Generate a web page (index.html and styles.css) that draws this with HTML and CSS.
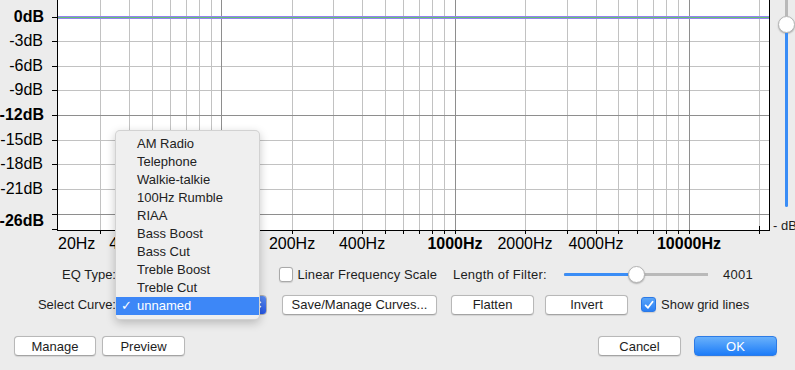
FILE: index.html
```html
<!DOCTYPE html>
<html lang="en">
<head>
  <meta charset="UTF-8">
  <title>Equalization</title>
  <link rel="stylesheet" href="styles.css">
</head>
<body>

<div class="dialog">
  <div class="graph">
    <svg class="plot" width="772" height="252" viewBox="0 0 772 252">
      <rect x="57" y="0" width="712" height="230" fill="#fff"/>
      <!-- horizontal grid -->
      <g class="grid">
        <line x1="57" y1="41.5" x2="769" y2="41.5"/>
        <line x1="57" y1="66.5" x2="769" y2="66.5"/>
        <line x1="57" y1="90.5" x2="769" y2="90.5"/>
        <line x1="57" y1="140.5" x2="769" y2="140.5"/>
        <line x1="57" y1="164.5" x2="769" y2="164.5"/>
        <line x1="57" y1="189.5" x2="769" y2="189.5"/>
      </g>
      <!-- vertical grid -->
      <g class="grid">
        <line x1="100.5" y1="0" x2="100.5" y2="230"/>
        <line x1="129.5" y1="0" x2="129.5" y2="230"/>
        <line x1="152.5" y1="0" x2="152.5" y2="230"/>
        <line x1="170.5" y1="0" x2="170.5" y2="230"/>
        <line x1="186.5" y1="0" x2="186.5" y2="230"/>
        <line x1="199.5" y1="0" x2="199.5" y2="230"/>
        <line x1="211.5" y1="0" x2="211.5" y2="230"/>
        <line x1="292.5" y1="0" x2="292.5" y2="230"/>
        <line x1="333.5" y1="0" x2="333.5" y2="230"/>
        <line x1="362.5" y1="0" x2="362.5" y2="230"/>
        <line x1="385.5" y1="0" x2="385.5" y2="230"/>
        <line x1="403.5" y1="0" x2="403.5" y2="230"/>
        <line x1="419.5" y1="0" x2="419.5" y2="230"/>
        <line x1="432.5" y1="0" x2="432.5" y2="230"/>
        <line x1="444.5" y1="0" x2="444.5" y2="230"/>
        <line x1="525.5" y1="0" x2="525.5" y2="230"/>
        <line x1="567.5" y1="0" x2="567.5" y2="230"/>
        <line x1="596.5" y1="0" x2="596.5" y2="230"/>
        <line x1="618.5" y1="0" x2="618.5" y2="230"/>
        <line x1="637.5" y1="0" x2="637.5" y2="230"/>
        <line x1="653.5" y1="0" x2="653.5" y2="230"/>
        <line x1="666.5" y1="0" x2="666.5" y2="230"/>
        <line x1="678.5" y1="0" x2="678.5" y2="230"/>
        <line x1="759.5" y1="0" x2="759.5" y2="230"/>
      </g>
      <g class="grid-major">
        <line x1="57" y1="115.5" x2="769" y2="115.5"/>
        <line x1="57" y1="214.5" x2="769" y2="214.5"/>
        <line x1="221.5" y1="0" x2="221.5" y2="230"/>
        <line x1="455.5" y1="0" x2="455.5" y2="230"/>
        <line x1="689.5" y1="0" x2="689.5" y2="230"/>
      </g>
      <!-- curve -->
      <line class="curve" x1="57" y1="17.5" x2="769" y2="17.5"/>
      <line class="curve-core" x1="57" y1="17.5" x2="769" y2="17.5"/>
      <!-- axes -->
      <g class="axis">
        <line x1="57.5" y1="0" x2="57.5" y2="231"/>
        <line x1="769.5" y1="0" x2="769.5" y2="231"/>
        <line x1="57" y1="230.5" x2="770" y2="230.5"/>
        <line x1="52" y1="17.5" x2="57" y2="17.5"/>
        <line x1="52" y1="41.5" x2="57" y2="41.5"/>
        <line x1="52" y1="66.5" x2="57" y2="66.5"/>
        <line x1="52" y1="90.5" x2="57" y2="90.5"/>
        <line x1="52" y1="115.5" x2="57" y2="115.5"/>
        <line x1="52" y1="140.5" x2="57" y2="140.5"/>
        <line x1="52" y1="164.5" x2="57" y2="164.5"/>
        <line x1="52" y1="189.5" x2="57" y2="189.5"/>
        <line x1="52" y1="214.5" x2="57" y2="214.5"/>
        <line x1="52" y1="229.5" x2="57" y2="229.5"/>
        <line x1="100.5" y1="230" x2="100.5" y2="234"/>
        <line x1="129.5" y1="230" x2="129.5" y2="234"/>
        <line x1="152.5" y1="230" x2="152.5" y2="234"/>
        <line x1="170.5" y1="230" x2="170.5" y2="234"/>
        <line x1="186.5" y1="230" x2="186.5" y2="234"/>
        <line x1="199.5" y1="230" x2="199.5" y2="234"/>
        <line x1="211.5" y1="230" x2="211.5" y2="234"/>
        <line x1="221.5" y1="230" x2="221.5" y2="234"/>
        <line x1="292.5" y1="230" x2="292.5" y2="234"/>
        <line x1="333.5" y1="230" x2="333.5" y2="234"/>
        <line x1="362.5" y1="230" x2="362.5" y2="234"/>
        <line x1="385.5" y1="230" x2="385.5" y2="234"/>
        <line x1="403.5" y1="230" x2="403.5" y2="234"/>
        <line x1="419.5" y1="230" x2="419.5" y2="234"/>
        <line x1="432.5" y1="230" x2="432.5" y2="234"/>
        <line x1="444.5" y1="230" x2="444.5" y2="234"/>
        <line x1="455.5" y1="230" x2="455.5" y2="234"/>
        <line x1="525.5" y1="230" x2="525.5" y2="234"/>
        <line x1="567.5" y1="230" x2="567.5" y2="234"/>
        <line x1="596.5" y1="230" x2="596.5" y2="234"/>
        <line x1="618.5" y1="230" x2="618.5" y2="234"/>
        <line x1="637.5" y1="230" x2="637.5" y2="234"/>
        <line x1="653.5" y1="230" x2="653.5" y2="234"/>
        <line x1="666.5" y1="230" x2="666.5" y2="234"/>
        <line x1="678.5" y1="230" x2="678.5" y2="234"/>
        <line x1="689.5" y1="230" x2="689.5" y2="234"/>
        <line x1="759.5" y1="226" x2="759.5" y2="234"/>
      </g>
      <!-- dB labels -->
      <g class="ylabels">
        <text class="major" x="44" y="22">0dB</text>
        <text x="43" y="46">-3dB</text>
        <text x="43" y="71">-6dB</text>
        <text x="43" y="95">-9dB</text>
        <text class="major" x="44" y="120">-12dB</text>
        <text x="43" y="145">-15dB</text>
        <text x="43" y="169">-18dB</text>
        <text x="43" y="194">-21dB</text>
        <text class="major" x="44" y="226">-26dB</text>
      </g>
      <!-- Hz labels -->
      <g class="xlabels">
        <text class="start" x="58" y="249">20Hz</text>
        <text x="128" y="249">40Hz</text>
        <text class="major" x="221" y="249">100Hz</text>
        <text x="292" y="249">200Hz</text>
        <text x="362" y="249">400Hz</text>
        <text class="major" x="455" y="249">1000Hz</text>
        <text x="525" y="249">2000Hz</text>
        <text x="596" y="249">4000Hz</text>
        <text class="major" x="689" y="249">10000Hz</text>
      </g>
    </svg>

    <div class="gain">
      <div class="vslider">
        <span class="vtrack-top"></span>
        <span class="thumb"></span>
        <span class="vtrack-fill"></span>
      </div>
      <span class="gain-label">- dB</span>
    </div>
  </div>

  <div class="row row-type">
    <span class="field-label">EQ Type:</span>
    <label class="check check-linear"><span class="box"></span>Linear Frequency Scale</label>
    <span class="filter-label">Length of Filter:</span>
    <div class="hslider">
      <span class="hfill"></span>
      <span class="thumb"></span>
    </div>
    <span class="filter-value">4001</span>
  </div>

  <div class="row row-curve">
    <span class="field-label">Select Curve:</span>
    <div class="popup-button">
      <span class="popup-value">unnamed</span>
      <span class="popup-arrows">
        <svg width="7" height="11" viewBox="0 0 7 11"><path d="M1 4 L3.5 1.5 L6 4 M1 7 L3.5 9.5 L6 7" fill="none" stroke="#fff" stroke-width="1.3"/></svg>
      </span>
    </div>
    <button class="btn btn-save">Save/Manage Curves...</button>
    <button class="btn btn-flatten">Flatten</button>
    <button class="btn btn-invert">Invert</button>
    <label class="check check-grid"><span class="box checked">
      <svg width="10" height="10" viewBox="0 0 10 10"><path d="M1.6 5.4 L4 7.8 L8.6 1.8" fill="none" stroke="#fff" stroke-width="1.8" stroke-linecap="round" stroke-linejoin="round"/></svg>
    </span>Show grid lines</label>
  </div>

  <div class="row row-footer">
    <button class="btn">Manage</button>
    <button class="btn btn-preview">Preview</button>
    <button class="btn btn-cancel">Cancel</button>
    <button class="btn btn-ok">OK</button>
  </div>

  <ul class="menu">
    <li>AM Radio</li>
    <li>Telephone</li>
    <li>Walkie-talkie</li>
    <li>100Hz Rumble</li>
    <li>RIAA</li>
    <li>Bass Boost</li>
    <li>Bass Cut</li>
    <li>Treble Boost</li>
    <li>Treble Cut</li>
    <li class="selected"><span class="tick">✓</span>unnamed</li>
  </ul>
</div>

</body>
</html>
```

FILE: styles.css
```css
/* Equalization dialog */
body {
  margin: 0;
  background-color: #ececec;
  font-family: "Liberation Sans", Arial, sans-serif;
  font-size: 13px;
  color: #1d1d1d;
  overflow: hidden;
}
.dialog {
  position: relative;
  width: 795px;
  height: 370px;
  overflow: hidden;
}

/* graph */
.graph {
  display: flex;
  height: 252px;
}
.plot {
  display: block;
  flex: none;
}
.grid line {
  stroke: #c2c2c2;
  stroke-width: 1;
}
.grid-major line {
  stroke: #8e8e8e;
  stroke-width: 1;
}
.curve {
  stroke: #9482ef;
  stroke-width: 3;
}
.curve-core {
  stroke: #63c46f;
  stroke-width: 1;
}
.axis line {
  stroke: #000;
  stroke-width: 1;
}
.ylabels text,
.xlabels text {
  font-family: "Liberation Sans", Arial, sans-serif;
  font-size: 16px;
  fill: #000;
}
.ylabels text {
  text-anchor: end;
}
.xlabels text {
  text-anchor: middle;
}
.xlabels text.start {
  text-anchor: start;
}
.ylabels .major,
.xlabels .major {
  font-weight: bold;
}

.gain {
  display: flex;
  flex-direction: column;
  width: 23px;
}
.vslider {
  display: flex;
  flex-direction: column;
  align-items: center;
  width: 16px;
  margin-left: 6px;
}
.vtrack-top {
  width: 3px;
  height: 16px;
  background: #b9b9b9;
}
.vtrack-fill {
  width: 3px;
  height: 174px;
  background: #3a8df6;
  border-radius: 0 0 2px 2px;
}
.gain-label {
  margin-top: 11px;
  margin-left: 1px;
  white-space: nowrap;
  line-height: 15px;
}

.thumb {
  display: block;
  width: 15px;
  height: 15px;
  border-radius: 50%;
  background: #fff;
  border: 0.5px solid #b4b4b4;
  box-shadow: 0 1px 1.5px rgba(0, 0, 0, 0.25);
  flex: none;
}

/* rows */
.row {
  display: flex;
  align-items: center;
}
.field-label {
  width: 116px;
  text-align: right;
  flex: none;
}
.row-type {
  height: 20px;
  margin-top: 12px;
}
.row-curve {
  height: 21px;
  margin-top: 10px;
}
.row-footer {
  height: 20px;
  margin-top: 21px;
  padding: 0 18px 0 14px;
}

.check {
  display: flex;
  align-items: center;
  white-space: nowrap;
}
.check .box {
  display: flex;
  align-items: center;
  justify-content: center;
  width: 13px;
  height: 13px;
  margin-right: 5px;
  background: #fff;
  border: 0.5px solid #a9a9a9;
  border-radius: 3px;
  box-shadow: 0 0.5px 1px rgba(0, 0, 0, 0.12);
}
.check .box.checked {
  background: linear-gradient(#5aa5f8, #2a7ff4);
  border-color: #2b79e6;
}
.check-linear {
  width: 158px;
  margin-left: 163px;
  letter-spacing: 0.1px;
}
.filter-label {
  width: 95px;
  margin-left: 16px;
  letter-spacing: 0.2px;
}
.hslider {
  position: relative;
  display: flex;
  align-items: center;
  width: 144px;
  height: 16px;
  margin-left: 16px;
  background: linear-gradient(#b9b9b9, #b9b9b9) no-repeat 0 50% / 100% 3px;
}
.hfill {
  width: 64px;
  height: 3px;
  background: #3a8df6;
  border-radius: 2px 0 0 2px;
}
.filter-value {
  margin-left: 15px;
  letter-spacing: 0.3px;
}

/* popup button under the open menu */
.popup-button {
  display: flex;
  width: 149px;
  height: 20px;
  margin-left: 2px;
  background: #fff;
  border: 0.5px solid #b0b0b0;
  border-radius: 4px;
  box-sizing: border-box;
  overflow: hidden;
}
.popup-value {
  flex: 1;
  padding-left: 8px;
  line-height: 19px;
}
.popup-arrows {
  display: flex;
  align-items: center;
  justify-content: center;
  width: 16px;
  background: linear-gradient(#5b8cf2, #2657e6);
}

/* buttons */
.btn {
  font-family: inherit;
  font-size: 13px;
  color: #1d1d1d;
  height: 20px;
  width: 83px;
  padding: 0;
  background: #fff;
  border: 0.5px solid #b8b8b8;
  border-bottom-color: #a4a4a4;
  border-radius: 4px;
  box-shadow: 0 0.5px 1px rgba(0, 0, 0, 0.1);
  flex: none;
}
.btn-save {
  width: 155px;
  margin-left: 15px;
}
.btn-flatten {
  margin-left: 14px;
}
.btn-invert {
  margin-left: 11px;
}
.check-grid {
  margin-left: 13px;
}
.row-footer .btn:first-child {
  width: 82px;
}
.btn-preview {
  margin-left: 6px;
}
.btn-cancel {
  margin-left: auto;
}
.btn-ok {
  margin-left: 13px;
  color: #fff;
  background: linear-gradient(#69b1fb, #1d7cf8);
  border-color: #2d7be6;
}

/* open curve menu */
.menu {
  position: absolute;
  left: 115px;
  top: 130px;
  width: 145px;
  margin: 0;
  padding: 4px 0;
  list-style: none;
  background: #efefef;
  border: 0.5px solid rgba(0, 0, 0, 0.12);
  border-radius: 5px;
  box-sizing: border-box;
  box-shadow: 0 3px 10px rgba(0, 0, 0, 0.22);
}
.menu li {
  position: relative;
  height: 18px;
  line-height: 18px;
  padding-left: 21px;
  color: #222;
}
.menu li.selected {
  background: #3d87f7;
  color: #fff;
}
.menu .tick {
  position: absolute;
  left: 5px;
  top: 0;
  font-family: "DejaVu Sans", sans-serif;
  font-size: 13px;
  font-weight: bold;
}
```
